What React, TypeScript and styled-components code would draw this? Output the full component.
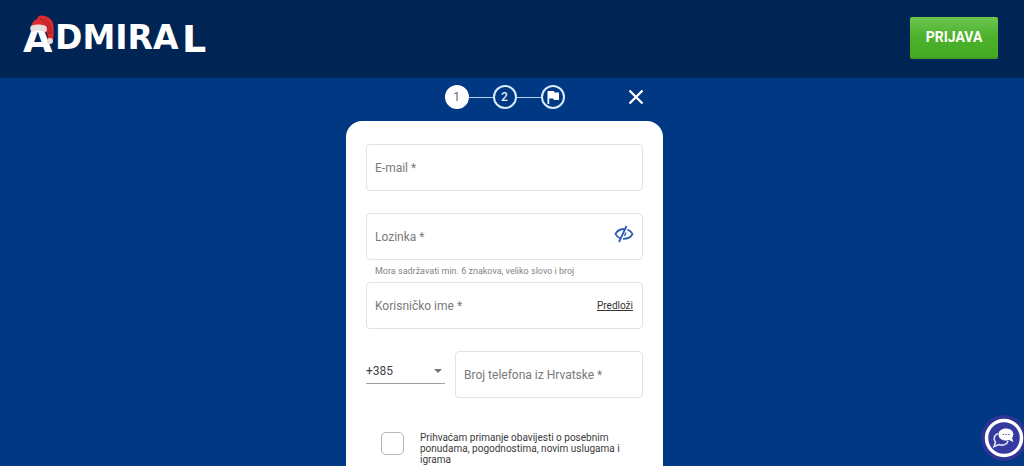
import React, { useState } from "react";
import styled, { createGlobalStyle } from "styled-components";

const GlobalStyle = createGlobalStyle`
  *, *::before, *::after { box-sizing: border-box; }
  body {
    margin: 0;
    background: #003883;
    font-family: Roboto, "Liberation Sans", sans-serif;
  }
`;

const Page = styled.div`
  min-height: 100vh;
  display: flex;
  flex-direction: column;
`;

const Header = styled.header`
  display: flex;
  align-items: center;
  justify-content: space-between;
  height: 78px;
  padding: 0 26px 2px 20px;
  background: #002554;
`;

const LogoLink = styled.a`
  display: block;
  height: 48px;
`;

const LoginButton = styled.button`
  width: 88px;
  height: 42px;
  border: 0;
  border-bottom: 2px solid #3f9c22;
  border-radius: 2px;
  background: linear-gradient(#6cc650, #4cb22c 50%, #43aa22);
  color: #fff;
  font: 700 14px/20px Roboto, sans-serif;
  cursor: pointer;
`;

const Main = styled.main`
  flex: 1;
  display: flex;
  flex-direction: column;
  align-items: center;
  padding-right: 15px;
`;

const Registration = styled.section`
  flex: 1;
  display: flex;
  flex-direction: column;
  width: 100%;
  max-width: 317px;
`;

const StepBar = styled.div`
  display: grid;
  grid-template-columns: 1fr auto 1fr;
  align-items: center;
  height: 43px;
  padding-bottom: 5px;
`;

const Steps = styled.ol`
  grid-column: 2;
  display: flex;
  align-items: center;
  margin: 0;
  padding: 0;
  list-style: none;
`;

const Step = styled.li<{ $active?: boolean }>`
  display: grid;
  place-items: center;
  width: 24px;
  height: 24px;
  border: 2px solid ${(p) => (p.$active ? "#fff" : "#d9ecfb")};
  border-radius: 50%;
  background: ${(p) => (p.$active ? "#fff" : "transparent")};
  color: ${(p) => (p.$active ? "#5b6b85" : "#e6f1fb")};
  font-size: 12px;
  font-weight: ${(p) => (p.$active ? 400 : 500)};
  line-height: 20px;
`;

const StepLine = styled.li`
  width: 24px;
  height: 1px;
  background: #b9d0ea;
`;

const CloseButton = styled.button`
  justify-self: end;
  display: grid;
  place-items: center;
  width: 24px;
  height: 24px;
  margin-right: 15px;
  padding: 0;
  border: 0;
  background: none;
  cursor: pointer;
`;

const Card = styled.form`
  flex: 1;
  padding: 23px 20px 0;
  border-radius: 16px 16px 0 0;
  background: #fff;
`;

const Field = styled.div`
  flex: 1;
  display: grid;
  grid-template-columns: 1fr auto;
  align-items: center;
  height: 47px;
  border: 1px solid #e2e2e2;
  border-radius: 4px;
`;

const FieldLabel = styled.label`
  grid-area: 1 / 1;
  padding-left: 8px;
  color: #7a7a7a;
  font-size: 12px;
  line-height: 16px;
  white-space: nowrap;
`;

const FieldInput = styled.input`
  grid-area: 1 / 1;
  width: 100%;
  height: 45px;
  padding: 0 8px;
  border: 0;
  outline: 0;
  background: transparent;
  color: #333;
  font: 400 12px/16px Roboto, sans-serif;
`;

const Hint = styled.p`
  height: 22px;
  margin: 0;
  padding-left: 9px;
  color: #858585;
  font-size: 9px;
  line-height: 22px;
`;

const EyeButton = styled.button`
  display: grid;
  margin: 0 8px 6px 0;
  padding: 0;
  border: 0;
  background: none;
  cursor: pointer;
`;

const SuggestLink = styled.a`
  margin-right: 9px;
  color: #333;
  font-size: 10px;
  line-height: 16px;
`;

const PhoneRow = styled.div`
  display: flex;
  gap: 10px;
`;

const PrefixBox = styled.div`
  display: grid;
  align-items: center;
  width: 79px;
  height: 26px;
  margin-top: 7px;
  border-bottom: 1px solid #a0a0a0;
`;

const PrefixSelect = styled.select`
  grid-area: 1 / 1;
  width: 100%;
  height: 24px;
  padding: 0;
  border: 0;
  appearance: none;
  background: transparent;
  color: #444;
  font: 400 12px/16px Roboto, sans-serif;
`;

const Caret = styled.span`
  grid-area: 1 / 1;
  justify-self: end;
  margin-right: 3px;
  border: 4px solid transparent;
  border-top-color: #757575;
  border-bottom: 0;
  pointer-events: none;
`;

const ConsentRow = styled.div`
  display: flex;
  align-items: flex-start;
  gap: 16px;
  padding: 12px 20px 0 15px;
`;

const ConsentBox = styled.input`
  flex: none;
  width: 23px;
  height: 23px;
  margin: 0;
  border: 1px solid #b5b5b5;
  border-radius: 5px;
  appearance: none;
  background: #fff;

  &:checked { background: #003883; }
`;

const ConsentText = styled.label`
  color: #3a3a3a;
  font-size: 10px;
  line-height: 11px;
`;

const ChatButton = styled.button`
  position: fixed;
  right: -3px;
  bottom: 5px;
  display: grid;
  place-items: center;
  width: 46px;
  height: 46px;
  padding: 0;
  border: 0;
  border-radius: 50%;
  background: #2f3494;
  cursor: pointer;
`;

const Gap = styled.div`
  height: 22px;
`;

function Logo() {
  return (
    <svg width="192" height="48" viewBox="0 0 192 48" role="img" aria-label="Admiral">
      <g fill="#fff" fontFamily='"DejaVu Sans", Roboto, sans-serif' fontWeight="700">
        <text x="3" y="38" fontSize="38">A</text>
        <text x="35" y="35" fontSize="33">DMIRA</text>
        <text x="162" y="38" fontSize="38">L</text>
      </g>
      <path d="M11 14C12 8 14 6 17 5C18 2 20 1 22 1.500C27 2 31 4 33 9C34 14 34 21 33 26L28 25C28 21 27 18 25 16Z" fill="#d92b30" />
      <path d="M20 5C24 6 28 11 29 20M24 5C28 7 31 12 31 20" fill="none" stroke="#a81d25" strokeWidth="1" />
      <path d="M11 12C15 10 21 10 26 12Q28 15 26 18Q19 15 12 18Q9 15 11 12Z" fill="#e9dcde" />
      <circle cx="30" cy="27" r="3" fill="#e6dadc" />
    </svg>
  );
}

export default function App() {
  const [visible, setVisible] = useState(false);
  return (
    <>
      <GlobalStyle />
      <Page>
        <Header>
          <LogoLink href="#"><Logo /></LogoLink>
          <LoginButton type="button">PRIJAVA</LoginButton>
        </Header>
        <Main>
          <Registration>
            <StepBar>
              <Steps>
                <Step $active>1</Step>
                <StepLine />
                <Step>2</Step>
                <StepLine />
                <Step>
                  <svg width="16" height="16" viewBox="0 0 16 16" aria-hidden="true">
                    <path d="M2.500 2H9L9.500 3.500H14V11H8.800L8.300 9.500H4.200V15H2.500Z" fill="#fff" />
                  </svg>
                </Step>
              </Steps>
              <CloseButton type="button" aria-label="Zatvori">
                <svg width="16" height="16" viewBox="0 0 16 16" aria-hidden="true">
                  <path d="M1.500 1.500L14.500 14.500M14.500 1.500L1.500 14.500" stroke="#fff" strokeWidth="2.300" />
                </svg>
              </CloseButton>
            </StepBar>
            <Card>
              <Field>
                <FieldLabel htmlFor="email">E-mail *</FieldLabel>
                <FieldInput id="email" type="email" />
              </Field>
              <Gap />
              <Field>
                <FieldLabel htmlFor="password">Lozinka *</FieldLabel>
                <FieldInput id="password" type={visible ? "text" : "password"} />
                <EyeButton type="button" aria-label="Prikaži lozinku" onClick={() => setVisible(!visible)}>
                  <svg width="20" height="18" viewBox="0 0 20 18" fill="none" stroke="#2b5fb4" strokeWidth="1.800" aria-hidden="true">
                    <path d="M6.500 13.500C4.200 12.700 2.500 11.300 1.500 9C3 6 6 4 10.500 4" />
                    <path d="M13.500 4.700C15.800 5.500 17.600 7 18.500 9C17 12 14 13.800 9 13.800" />
                    <path d="M12.500 1L5 17" />
                    <path d="M12 7.500L10.500 11" strokeWidth="1.500" />
                  </svg>
                </EyeButton>
              </Field>
              <Hint>Mora sadržavati min. 6 znakova, veliko slovo i broj</Hint>
              <Field>
                <FieldLabel htmlFor="username">Korisničko ime *</FieldLabel>
                <FieldInput id="username" type="text" />
                <SuggestLink href="#">Predloži</SuggestLink>
              </Field>
              <Gap />
              <PhoneRow>
                <PrefixBox>
                  <PrefixSelect aria-label="Pozivni broj">
                    <option>+385</option>
                  </PrefixSelect>
                  <Caret />
                </PrefixBox>
                <Field>
                  <FieldLabel htmlFor="phone">Broj telefona iz Hrvatske *</FieldLabel>
                  <FieldInput id="phone" type="tel" />
                </Field>
              </PhoneRow>
              <Gap />
              <ConsentRow>
                <ConsentBox id="consent" type="checkbox" />
                <ConsentText htmlFor="consent">
                  Prihvaćam primanje obavijesti o posebnim ponudama, pogodnostima, novim uslugama i igrama
                </ConsentText>
              </ConsentRow>
            </Card>
          </Registration>
        </Main>
      </Page>
      <ChatButton type="button" aria-label="Chat">
        <svg width="46" height="46" viewBox="0 0 46 46" aria-hidden="true">
          <circle cx="23" cy="23" r="17.500" fill="#343a9e" stroke="#fff" strokeWidth="3.500" />
          <path d="M17 18.500C13 20 12 24 14.500 27L13 31.500L18 29.500C22 31 26 29.500 27 26" fill="none" stroke="#e4e4f5" strokeWidth="1.600" />
          <path d="M25 13.500C20.500 13.500 17.500 16 17.500 19.500S20.500 25.500 25 25.500Q26.500 25.500 28 25L32.500 27L31 23C34.500 18.500 31 13.500 25 13.500Z" fill="#fff" />
          <path d="M21.500 19.500H28.500" stroke="#555aa8" strokeWidth="1.200" strokeDasharray="1.500 1.200" />
        </svg>
      </ChatButton>
    </>
  );
}
